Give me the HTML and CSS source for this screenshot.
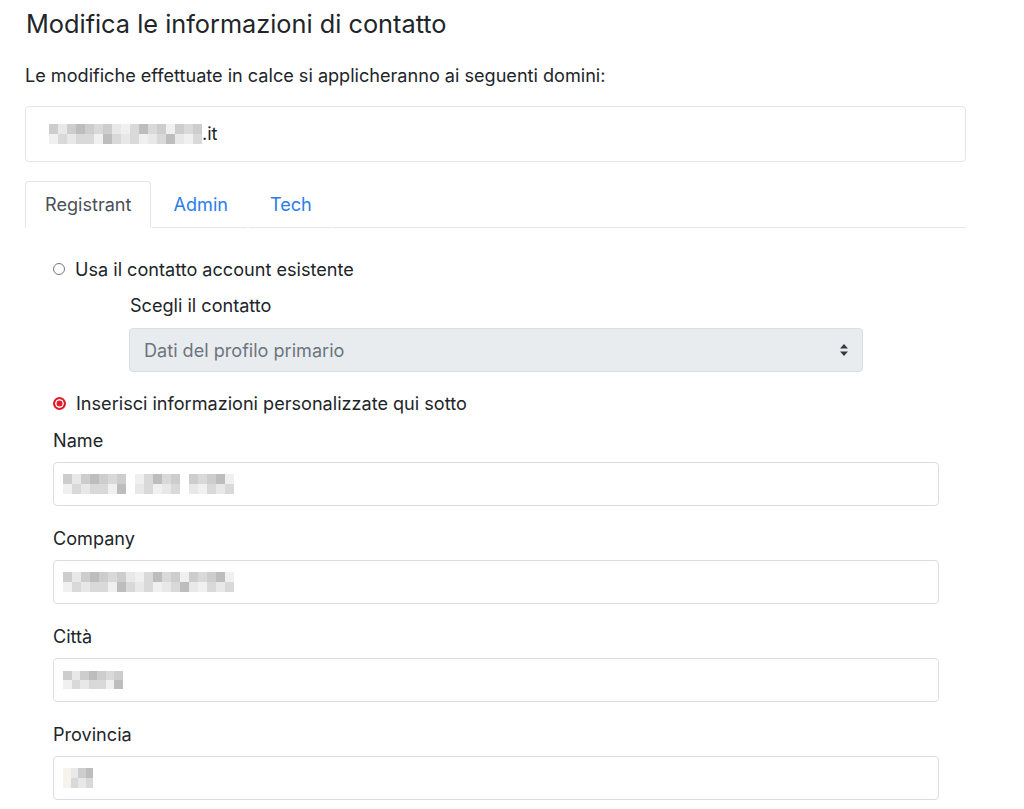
FILE: index.html
```html
<!DOCTYPE html>
<html lang="it">
<head>
<meta charset="utf-8">
<title>Modifica le informazioni di contatto</title>
<link rel="stylesheet" href="styles.css">
</head>
<body>
<main class="page">
  <h1 class="title">Modifica le informazioni di contatto</h1>
  <p class="intro">Le modifiche effettuate in calce si applicheranno ai seguenti domini:</p>

  <div class="domain-box">
    <span class="blur blur-domain"><i></i><i></i><i></i><i></i><i></i><i></i><i></i><i></i><i></i><i></i><i></i><i></i><i></i><i></i><i></i><i></i><i></i><i></i><i></i><i></i><i></i><i></i><i></i><i></i><i></i><i></i><i></i><i></i><i></i><i></i><i></i><i></i><i></i><i></i></span><span class="domain-tld">.it</span>
  </div>

  <nav class="tabs">
    <a class="tab active">Registrant</a>
    <a class="tab">Admin</a>
    <a class="tab">Tech</a>
    <span class="tab-fill"></span>
  </nav>

  <section class="tab-body">
    <label class="radio-row">
      <span class="radio"></span>
      <span>Usa il contatto account esistente</span>
    </label>

    <div class="choose">
      <div class="label">Scegli il contatto</div>
      <div class="select">
        <span>Dati del profilo primario</span>
        <svg class="select-arrows" width="10" height="14" viewBox="0 0 10 14"><path d="M5 1 L9 5.5 H1 Z M5 13 L9 8.5 H1 Z" fill="#343a40"/></svg>
      </div>
    </div>

    <label class="radio-row second">
      <span class="radio checked"></span>
      <span>Inserisci informazioni personalizzate qui sotto</span>
    </label>

    <div class="field">
      <div class="label">Name</div>
      <div class="input"><span class="blur blur-name"><i></i><i></i><i></i><i></i><i></i><i></i><i></i><i></i><i></i><i></i><i></i><i></i><i></i><i></i><i></i><i></i><i></i><i></i><i></i><i></i><i></i><i></i><i></i><i></i><i></i><i></i><i></i><i></i><i></i><i></i><i></i><i></i><i></i><i></i><i></i><i></i><i></i><i></i></span></div>
    </div>
    <div class="field">
      <div class="label">Company</div>
      <div class="input"><span class="blur blur-company"><i></i><i></i><i></i><i></i><i></i><i></i><i></i><i></i><i></i><i></i><i></i><i></i><i></i><i></i><i></i><i></i><i></i><i></i><i></i><i></i><i></i><i></i><i></i><i></i><i></i><i></i><i></i><i></i><i></i><i></i><i></i><i></i><i></i><i></i><i></i><i></i><i></i><i></i></span></div>
    </div>
    <div class="field">
      <div class="label">Città</div>
      <div class="input"><span class="blur blur-city"><i></i><i></i><i></i><i></i><i></i><i></i><i></i><i></i><i></i><i></i><i></i><i></i><i></i><i></i></span></div>
    </div>
    <div class="field">
      <div class="label">Provincia</div>
      <div class="input"><span class="blur blur-prov"><i></i><i></i><i></i><i></i><i></i><i></i><i></i><i></i></span></div>
    </div>
  </section>
</main>
</body>
</html>
```
FILE: styles.css
```css
* { box-sizing: border-box; }
html, body { margin: 0; background: #fff; }
body {
  font-family: Inter, "Noto Sans", "Liberation Sans", sans-serif;
  font-size: 18.1px;
  line-height: 24px;
  color: #212529;
}
.page {
  width: 941px;
  margin-left: 25px;
  padding-top: 8px;
}
.title {
  font-size: 25.3px;
  font-weight: 400;
  line-height: 32px;
  margin: 0 0 23px 1px;
}
.intro {
  margin: 0 0 19px 0;
}
.domain-box {
  height: 56px;
  border: 1px solid #e3e6ea;
  border-radius: 4px;
  display: flex;
  align-items: center;
  padding-left: 23px;
  margin-bottom: 19px;
}
.domain-tld { position: relative; top: -1px; }

/* pixelated placeholder blocks */
.blur {
  display: grid;
  grid-auto-flow: column;
  grid-template-rows: repeat(2, 10px);
  grid-auto-columns: 9px;
}
.blur i { display: block; background: #d9d9da; }
.blur i:nth-child(3n) { background: #e8e8e9; }
.blur i:nth-child(4n+1) { background: #cdcdce; }
.blur i:nth-child(5n+2) { background: #f0f0f1; }
.blur i:nth-child(7n) { background: #bdbdbe; }
.blur-name i:nth-child(n+15):nth-child(-n+16),
.blur-name i:nth-child(n+27):nth-child(-n+28) { background: #fff; }
.blur-city { grid-template-rows: repeat(2, 9px); grid-auto-columns: 8.5px; }
.blur-prov { grid-template-rows: repeat(2, 10px); grid-auto-columns: 7.5px; }
.blur-prov i:nth-child(1), .blur-prov i:nth-child(2) { background: #f6f3ee; }

/* tabs */
.tabs {
  display: flex;
  align-items: flex-end;
  height: 47px;
}
.tab {
  display: block;
  height: 47px;
  padding: 10px 19px 0 19px;
  color: #2b7de9;
  border: 1px solid transparent;
  border-bottom: 1px solid #e3e6ea;
  border-radius: 4px 4px 0 0;
  cursor: pointer;
}
.tab + .tab { padding: 10px 19px 0 21px; }
.tab.active {
  color: #495057;
  border-color: #e3e6ea #e3e6ea transparent;
  background: #fff;
}
.tab-fill {
  flex: 1;
  height: 1px;
  background: #e3e6ea;
}

.tab-body {
  padding: 29px 27px 0 28px;
}
.radio-row {
  display: flex;
  align-items: center;
  gap: 10px;
  height: 24px;
}
.radio-row.second { margin-top: 19px; }
.radio {
  width: 12px;
  height: 12px;
  border-radius: 50%;
  border: 1px solid #767676;
  background: #fff;
  flex: none;
}
.radio.checked {
  border: 2px solid #e21b2b;
  background: #e21b2b;
  box-shadow: inset 0 0 0 1.5px #fff;
  width: 13px;
  height: 13px;
}
.choose {
  padding-left: 76px;
  margin-top: 12px;
  width: 886px;
  padding-right: 76px;
}
.label { height: 24px; }
.choose .label { margin-left: 1px; }
.select {
  margin-top: 11px;
  height: 44px;
  background: #e9ecef;
  border: 1px solid #dadee3;
  border-radius: 4px;
  display: flex;
  align-items: center;
  justify-content: space-between;
  padding: 0 13px 0 14px;
  color: #6c757d;
}
.select-arrows { display: block; }
.field { margin-top: 13px; }
.field + .field { margin-top: 20px; }
.field .input {
  margin-top: 10px;
  height: 44px;
  border: 1px solid #dadee3;
  border-radius: 4px;
  display: flex;
  align-items: center;
  padding-left: 9px;
}
```
